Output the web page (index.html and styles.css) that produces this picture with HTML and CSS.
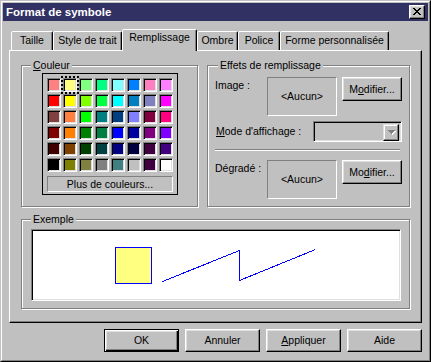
FILE: index.html
```html
<!DOCTYPE html>
<html>
<head>
<meta charset="utf-8">
<link rel="stylesheet" href="styles.css">
</head>
<body>
<div class="window">
  <div class="inner">
    <div class="titlebar">
      <span class="title">Format de symbole</span>
      <div class="close">
        <svg width="8" height="7" viewBox="0 0 8 7"><path fill="#000" d="M0 0h2v1H0z M6 0h2v1H6z M1 1h2v1H1z M5 1h2v1H5z M2 2h4v1H2z M3 3h2v1H3z M2 4h4v1H2z M1 5h2v1H1z M5 5h2v1H5z M0 6h2v1H0z M6 6h2v1H6z"/></svg>
      </div>
    </div>

    <div class="tabs">
      <div class="tab t-taille">Taille</div>
      <div class="tab t-style">Style de trait</div>
      <div class="tab t-rempl active">Remplissage</div>
      <div class="tab t-ombre">Ombre</div>
      <div class="tab t-police">Police</div>
      <div class="tab t-forme">Forme personnalisée</div>
    </div>

    <div class="panel">
      <div class="top-row">
        <div class="group couleur">
          <span class="legend"><u>C</u>ouleur</span>
          <div class="palette">
            <div class="swatches">
              <div class="sw" style="background:#ff8080"></div>
              <div class="sw selected" style="background:#ffff80"></div>
              <div class="sw" style="background:#80ff80"></div>
              <div class="sw" style="background:#00ff80"></div>
              <div class="sw" style="background:#80ffff"></div>
              <div class="sw" style="background:#0080ff"></div>
              <div class="sw" style="background:#ff80c0"></div>
              <div class="sw" style="background:#ff80ff"></div>

              <div class="sw" style="background:#ff0000"></div>
              <div class="sw" style="background:#ffff00"></div>
              <div class="sw" style="background:#80ff00"></div>
              <div class="sw" style="background:#00ff40"></div>
              <div class="sw" style="background:#00ffff"></div>
              <div class="sw" style="background:#0080c0"></div>
              <div class="sw" style="background:#8080c0"></div>
              <div class="sw" style="background:#ff00ff"></div>

              <div class="sw" style="background:#804040"></div>
              <div class="sw" style="background:#ff8040"></div>
              <div class="sw" style="background:#00ff00"></div>
              <div class="sw" style="background:#008080"></div>
              <div class="sw" style="background:#004080"></div>
              <div class="sw" style="background:#8080ff"></div>
              <div class="sw" style="background:#800040"></div>
              <div class="sw" style="background:#ff0080"></div>

              <div class="sw" style="background:#800000"></div>
              <div class="sw" style="background:#ff8000"></div>
              <div class="sw" style="background:#008000"></div>
              <div class="sw" style="background:#008040"></div>
              <div class="sw" style="background:#0000ff"></div>
              <div class="sw" style="background:#0000a0"></div>
              <div class="sw" style="background:#800080"></div>
              <div class="sw" style="background:#8000ff"></div>

              <div class="sw" style="background:#400000"></div>
              <div class="sw" style="background:#804000"></div>
              <div class="sw" style="background:#004000"></div>
              <div class="sw" style="background:#004040"></div>
              <div class="sw" style="background:#000080"></div>
              <div class="sw" style="background:#000040"></div>
              <div class="sw" style="background:#400040"></div>
              <div class="sw" style="background:#400080"></div>

              <div class="sw" style="background:#000000"></div>
              <div class="sw" style="background:#808000"></div>
              <div class="sw" style="background:#808040"></div>
              <div class="sw" style="background:#808080"></div>
              <div class="sw" style="background:#408080"></div>
              <div class="sw" style="background:#c0c0c0"></div>
              <div class="sw" style="background:#400040"></div>
              <div class="sw" style="background:#ffffff"></div>
            </div>
            <div class="more">Plus de couleurs...</div>
          </div>
        </div>

        <div class="group effets">
          <span class="legend legend-effets">Effets de remplissage</span>
          <div class="fill-row">
            <div class="fill-label">Image :</div>
            <div class="preview">&lt;Aucun&gt;</div>
            <div class="btn btn-mod">M<u>o</u>difier...</div>
          </div>
          <div class="mode-row">
            <div class="mode-label"><u>M</u>ode d'affichage :</div>
            <div class="combo">
              <div class="combo-btn">
                <svg width="8" height="5" viewBox="0 0 8 5"><path fill="#fff" d="M1 1h7v1H1z M2 2h5v1H2z M3 3h3v1H3z M4 4h1v1H4z"/><path fill="#808080" d="M0 0h7v1H0z M1 1h5v1H1z M2 2h3v1H2z M3 3h1v1H3z"/></svg>
              </div>
            </div>
          </div>
          <div class="sep"></div>
          <div class="fill-row">
            <div class="fill-label">Dégradé :</div>
            <div class="preview">&lt;Aucun&gt;</div>
            <div class="btn btn-mod">Mo<u>d</u>ifier...</div>
          </div>
        </div>
      </div>

      <div class="group exemple">
        <span class="legend">Exemple</span>
        <div class="sample">
          <svg width="366" height="68" viewBox="0 0 366 68">
            <rect x="82.5" y="16.5" width="36" height="36" fill="#ffff80" stroke="#0000ff" stroke-width="1" shape-rendering="crispEdges"/>
            <polyline points="129.5,50.5 206.5,19.5 206.5,49.5 282.5,18.5" fill="none" stroke="#0000ff" stroke-width="1" shape-rendering="crispEdges"/>
          </svg>
        </div>
      </div>
    </div>

    <div class="buttons">
      <div class="btn dlg default">OK</div>
      <div class="btn dlg">Annuler</div>
      <div class="btn dlg"><u>A</u>ppliquer</div>
      <div class="btn dlg">Aide</div>
    </div>
  </div>
</div>
</body>
</html>
```

FILE: styles.css
```css
* { box-sizing: border-box; }
html, body { margin: 0; padding: 0; }
body {
  width: 431px;
  height: 362px;
  overflow: hidden;
  background: #c0c0c0;
  font-family: "Liberation Sans", Arial, sans-serif;
  font-size: 10.5px;
  line-height: 13px;
  color: #000;
}
u { text-decoration: underline; text-underline-offset: 1px; }

.window {
  width: 431px;
  height: 362px;
  border: 1px solid;
  border-color: #c0c0c0 #000 #000 #c0c0c0;
}
.inner {
  height: 100%;
  border: 1px solid;
  border-color: #fff #808080 #808080 #fff;
  padding: 1px;
  display: flex;
  flex-direction: column;
}

/* title bar */
.titlebar {
  height: 18px;
  flex: none;
  background: #313163;
  display: flex;
  align-items: center;
  justify-content: space-between;
  padding: 0 3px 0 3px;
}
.title {
  color: #fff;
  font-weight: bold;
  font-size: 11.5px;
  line-height: 14px;
}
.close {
  width: 16px;
  height: 14px;
  background: #c0c0c0;
  border: 1px solid;
  border-color: #fff #000 #000 #fff;
  box-shadow: inset -1px -1px #808080, inset 1px 1px #dfdfdf;
  padding: 2px 0 0 3px;
}
.close svg { display: block; }

/* tabs */
.tabs {
  flex: none;
  display: flex;
  align-items: flex-end;
  height: 21px;
  margin: 8px 0 0 8px;
  position: relative;
  z-index: 1;
}
.tab {
  height: 19px;
  background: #c0c0c0;
  border: 1px solid;
  border-bottom: none;
  border-color: #fff #000 transparent #fff;
  border-radius: 2px 2px 0 0;
  box-shadow: inset -1px 0 #808080;
  text-align: center;
  padding-top: 2px;
  white-space: nowrap;
}
.tab.active {
  height: 22px;
  margin-bottom: -1px;
  padding-top: 1px;
}
.t-taille { width: 42px; }
.t-style { width: 69px; }
.t-rempl { width: 75px; }
.t-ombre { width: 41px; }
.t-police { width: 42px; }
.t-forme { width: 109px; }

/* tab panel */
.panel {
  flex: none;
  margin: 0 6px;
  height: 273px;
  border: 1px solid;
  border-color: #fff #000 #000 #fff;
  box-shadow: inset -1px -1px #808080;
  padding: 14px 11px 13px 11px;
  display: flex;
  flex-direction: column;
  gap: 12px;
}
.top-row {
  display: flex;
  gap: 9px;
}

/* group boxes */
.group {
  position: relative;
  border: 1px solid #808080;
  box-shadow: inset 1px 1px #fff, 1px 1px #fff;
}
.legend {
  position: absolute;
  top: -7px;
  left: 9px;
  padding: 0 2px;
  background: #c0c0c0;
  line-height: 13px;
  white-space: nowrap;
}
.legend-effets { left: 10px; }

.couleur { width: 177px; height: 142px; }
.effets { width: 203px; height: 142px; padding: 11px 0 0 7px; }
.exemple { height: 90px; padding: 9px 0 0 9px; }

/* palette */
.palette {
  width: 136px;
  margin: 7px 0 0 20px;
  border: 1px solid #000;
  padding: 4px 4px 2px 4px;
}
.swatches {
  display: grid;
  grid-template-columns: repeat(8, 14px);
  grid-auto-rows: 14px;
  gap: 2px;
}
.sw {
  border: 1px solid;
  border-color: #808080 #fff #fff #808080;
  box-shadow: inset 1px 1px #000, inset -1px -1px #dfdfdf;
}
.sw.selected {
  outline: 2px dotted #000;
  outline-offset: 0;
}
.more {
  margin-top: 4px;
  height: 16px;
  border: 1px solid;
  border-color: #808080 #fff #fff #808080;
  text-align: center;
  line-height: 14px;
}

/* fill effects */
.fill-row {
  display: flex;
  align-items: flex-start;
}
.fill-label {
  width: 52px;
  padding-top: 2px;
}
.preview {
  width: 70px;
  height: 39px;
  border: 1px solid;
  border-color: #808080 #fff #fff #808080;
  display: flex;
  align-items: center;
  justify-content: center;
}
.btn {
  background: #c0c0c0;
  border: 1px solid;
  border-color: #fff #000 #000 #fff;
  box-shadow: inset -1px -1px #808080, inset 1px 1px #dfdfdf;
  display: flex;
  align-items: center;
  justify-content: center;
  white-space: nowrap;
}
.btn-mod {
  width: 60px;
  height: 24px;
  margin-left: 5px;
}
.mode-row {
  display: flex;
  align-items: center;
  margin-top: 5px;
  height: 21px;
}
.mode-label {
  width: 98px;
  padding-left: 1px;
}
.combo {
  width: 89px;
  height: 21px;
  border: 1px solid;
  border-color: #808080 #fff #fff #808080;
  box-shadow: inset 1px 1px #000, inset -1px -1px #dfdfdf;
  padding: 2px 2px 2px 0;
  display: flex;
  justify-content: flex-end;
}
.combo-btn {
  width: 16px;
  height: 17px;
  border: 1px solid;
  border-color: #dfdfdf #000 #000 #dfdfdf;
  box-shadow: inset -1px -1px #808080, inset 1px 1px #fff;
  display: flex;
  align-items: center;
  justify-content: center;
  padding-left: 1px;
}
.combo-btn svg { display: block; }
.sep {
  width: 185px;
  margin-top: 7px;
  margin-bottom: 9px;
  height: 2px;
  border-top: 1px solid #808080;
  border-bottom: 1px solid #fff;
}

/* example */
.sample {
  width: 370px;
  height: 72px;
  background: #fff;
  border: 1px solid;
  border-color: #808080 #fff #fff #808080;
  box-shadow: inset 1px 1px #000, inset -1px -1px #dfdfdf;
  padding: 1px;
}
.sample svg { display: block; }

/* dialog buttons */
.buttons {
  flex: none;
  display: flex;
  justify-content: flex-end;
  gap: 6px;
  margin: 6px 6px 0 0;
}
.dlg {
  width: 75px;
  height: 23px;
}
.dlg.default {
  border: 1px solid #000;
  box-shadow: inset 1px 1px #fff, inset -1px -1px #000, inset -2px -2px #808080, inset 2px 2px #dfdfdf;
}
```
